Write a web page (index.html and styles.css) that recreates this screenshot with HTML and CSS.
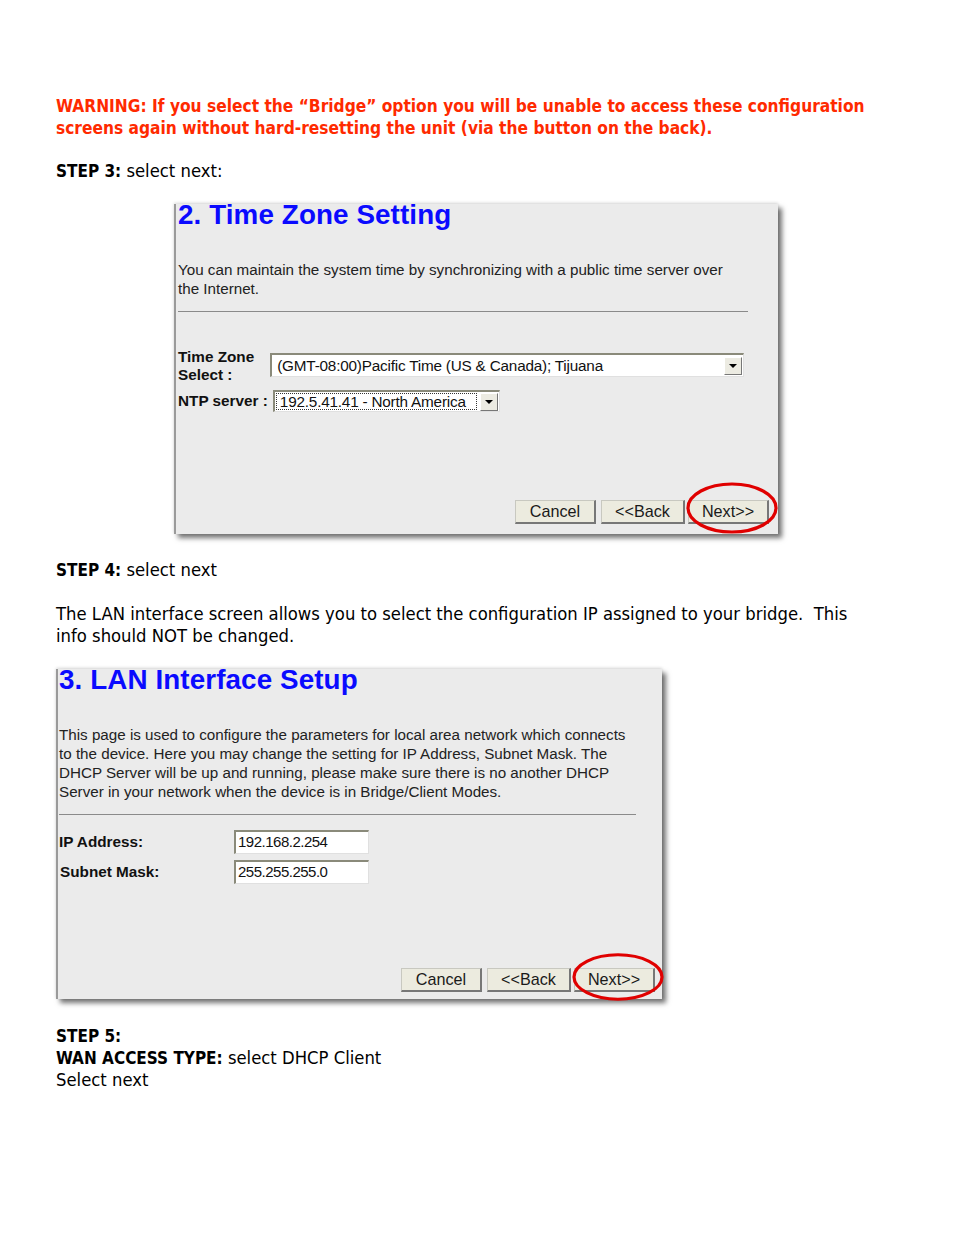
FILE: index.html
```html
<!DOCTYPE html>
<html>
<head>
<meta charset="utf-8">
<link rel="stylesheet" href="styles.css">
</head>
<body>
<div class="page">
  <p class="warning">WARNING: If you select the “Bridge” option you will be unable to access these configuration screens again without hard-resetting the unit (via the button on the back).</p>
  <p class="step s3"><b>STEP 3:</b> select next:</p>

  <div class="panel p1">
    <h2 class="ptitle">2. Time Zone Setting</h2>
    <p class="pdesc">You can maintain the system time by synchronizing with a public time server over<br>the Internet.</p>
    <hr class="prule">
    <div class="tzrow">
      <div class="flabel">Time Zone<br>Select :</div>
      <div class="sel tzsel"><span class="seltext">(GMT-08:00)Pacific Time (US &amp; Canada); Tijuana</span><span class="arrow"></span></div>
    </div>
    <div class="ntprow">
      <div class="flabel">NTP server :</div>
      <div class="sel ntpsel"><span class="seltext dotted">192.5.41.41 - North America</span><span class="arrow"></span></div>
    </div>
    <div class="btns">
      <span class="btn bc">Cancel</span>
      <span class="btn bb">&lt;&lt;Back</span>
      <span class="btn bn">Next&gt;&gt;<svg class="ring" viewBox="0 0 92 52" preserveAspectRatio="none"><ellipse cx="46" cy="26" rx="44" ry="24" fill="none" stroke="#e00000" stroke-width="3.2"/></svg></span>
    </div>
  </div>

  <p class="step s4"><b>STEP 4:</b> select next</p>
  <p class="para">The LAN interface screen allows you to select the configuration IP assigned to your bridge.&nbsp; This info should NOT be changed.</p>

  <div class="panel p2">
    <h2 class="ptitle">3. LAN Interface Setup</h2>
    <p class="pdesc d2">This page is used to configure the parameters for local area network which connects<br>to the device. Here you may change the setting for IP Address, Subnet Mask. The<br>DHCP Server will be up and running, please make sure there is no another DHCP<br>Server in your network when the device is in Bridge/Client Modes.</p>
    <hr class="prule r2">
    <div class="iprow">
      <div class="flabel iplabel">IP Address:</div>
      <div class="tin">192.168.2.254</div>
    </div>
    <div class="iprow">
      <div class="flabel iplabel sm">Subnet Mask:</div>
      <div class="tin">255.255.255.0</div>
    </div>
    <div class="btns b2">
      <span class="btn bc">Cancel</span>
      <span class="btn bb">&lt;&lt;Back</span>
      <span class="btn bn">Next&gt;&gt;<svg class="ring ring2" viewBox="0 0 92 52" preserveAspectRatio="none"><ellipse cx="46" cy="26" rx="44" ry="24" fill="none" stroke="#e00000" stroke-width="3.2"/></svg></span>
    </div>
  </div>

  <p class="step s5"><b>STEP 5:</b><br><b>WAN ACCESS TYPE:</b> select DHCP Client<br>Select next</p>
</div>
</body>
</html>
```

FILE: styles.css
```css
html, body {
  margin: 0;
  padding: 0;
  background: #ffffff;
}
.page {
  width: 954px;
  height: 1235px;
  box-sizing: border-box;
  padding: 95px 0 0 56px;
  font-family: "DejaVu Sans Condensed", "DejaVu Sans", sans-serif;
  font-size: 18.3px;
  line-height: 22px;
  color: #000;
}
p { margin: 0; }
.warning {
  color: #ff2a00;
  font-weight: bold;
  font-size: 17.2px;
  width: 850px;
}
.step b, .para b {
  font-weight: bold;
  font-size: 17px;
}
.s3 { margin-top: 21px; }

.panel {
  position: relative;
  background: #ebebeb;
  border-left: 2px solid #9a9a9a;
  box-shadow: 4px 4px 5px rgba(0,0,0,0.55), 0 -1px 3px rgba(0,0,0,0.15);
  box-sizing: border-box;
  font-family: "Liberation Sans", Arial, sans-serif;
  color: #1a1a1a;
  display: flex;
  flex-direction: column;
  padding-left: 2px;
}
.p1 {
  width: 604px;
  height: 330px;
  margin: 22px 0 0 118px;
}
.p2 {
  width: 606px;
  height: 330px;
  margin: 22px 0 0 0;
  padding-left: 1px;
}
.ptitle {
  margin: 0;
  font-family: "Liberation Sans", Arial, sans-serif;
  font-weight: bold;
  font-size: 27.8px;
  line-height: 21px;
  color: #0a0aff;
  letter-spacing: 0.1px;
}
.pdesc {
  margin-top: 35px;
  font-size: 15.2px;
  line-height: 19px;
  color: #222;
}
.prule {
  margin: 13px 0 0 0;
  width: 570px;
  border: 0;
  border-top: 1px solid #8a8a8a;
  height: 0;
}
.r2 { width: 577px; margin-top: 13px; }

.flabel {
  font-weight: bold;
  font-size: 15.3px;
  line-height: 18px;
  color: #111;
}
.tzrow {
  display: flex;
  align-items: flex-start;
  margin-top: 36px;
  gap: 16px;
}
.ntprow {
  display: flex;
  align-items: center;
  margin-top: 6px;
  gap: 5px;
}
.sel {
  display: flex;
  align-items: center;
  background: #fff;
  border-top: 2px solid #8a8a7a;
  border-left: 2px solid #8a8a7a;
  border-right: 1px solid #e0e0e0;
  border-bottom: 1px solid #e0e0e0;
  box-sizing: border-box;
  font-size: 15.3px;
  color: #111;
  padding: 0 1px 0 5px;
}
.tzsel {
  width: 474px;
  height: 24px;
  margin-top: 5px;
}
.ntpsel {
  width: 227px;
  height: 22px;
  padding-left: 1px;
}
.seltext { flex: 1; white-space: nowrap; letter-spacing: -0.2px; }
.dotted {
  outline: 1px dotted #333;
  outline-offset: -1px;
  padding-left: 4px;
  margin-right: 3px;
  line-height: 17px;
}
.arrow {
  width: 18px;
  height: 18px;
  box-sizing: border-box;
  background: #ecebe2;
  border: 1px solid #777;
  border-top-color: #fff;
  border-left-color: #fff;
  position: relative;
}
.arrow::after {
  content: "";
  position: absolute;
  left: 4px;
  top: 6px;
  border-left: 4px solid transparent;
  border-right: 4px solid transparent;
  border-top: 4px solid #000;
}
.btns {
  margin-top: auto;
  margin-bottom: 10px;
  display: flex;
  justify-content: flex-end;
  gap: 5px;
  padding-right: 9px;
}
.b2 { margin-bottom: 7px; padding-right: 7px; }
.btn {
  position: relative;
  display: inline-block;
  box-sizing: border-box;
  height: 24px;
  line-height: 21px;
  text-align: center;
  background: #ecebdf;
  border: 1px solid #c8c8c0;
  border-right: 2px solid #777;
  border-bottom: 2px solid #777;
  font-size: 16.2px;
  color: #1a1a1a;
}
.bc { width: 81px; }
.bb { width: 84px; }
.bn { width: 81px; margin-left: -2px; }
.ring {
  position: absolute;
  left: -3px;
  top: -19px;
  width: 92px;
  height: 52px;
  overflow: visible;
}
.ring2 {
  top: -16px;
  height: 48px;
}

.s4 { margin-top: 25px; }
.para { margin-top: 22px; width: 812px; }

.d2 { margin-top: 35px; }
.iprow {
  display: flex;
  align-items: center;
  margin-top: 15px;
}
.iprow + .iprow { margin-top: 6px; }
.iplabel { width: 175px; }
.sm { padding-left: 1px; width: 174px; }
.tin {
  width: 135px;
  height: 24px;
  box-sizing: border-box;
  background: #fff;
  border-top: 2px solid #8a8a7a;
  border-left: 2px solid #8a8a7a;
  border-right: 1px solid #e0e0e0;
  border-bottom: 1px solid #e0e0e0;
  font-size: 15px;
  letter-spacing: -0.5px;
  line-height: 20px;
  padding-left: 2px;
  color: #111;
}
.s5 { margin-top: 26px; }
```
